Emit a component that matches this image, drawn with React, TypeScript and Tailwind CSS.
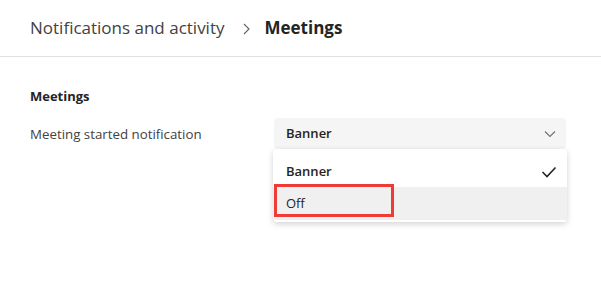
export default function App() {
  return (
    <div className="w-[601px] h-[294px] bg-white text-[#242424]" style={{ fontFamily: '"Open Sans", "Noto Sans", sans-serif' }}>
      <div className="h-[57px] border-b border-[#e1e1e1] px-[30px] flex items-center">
        <span className="text-[17px] text-[#424242]">Notifications and activity</span>
        <svg width="9" height="14" viewBox="0 0 9 14" className="ml-[17px] mr-[14px] mt-[2px]">
          <path d="M2 2l5 5-5 5" fill="none" stroke="#616161" strokeWidth="1.1" />
        </svg>
        <span className="text-[17px] font-bold">Meetings</span>
      </div>

      <div className="px-[30px] pt-[30px]">
        <div className="text-[13px] font-bold leading-[19px]">Meetings</div>
        <div className="mt-[12px] flex items-start">
          <div className="w-[244px] pt-[7px] text-[13.3px] text-[#424242]">Meeting started notification</div>
          <div className="w-[292px] relative">
            <div className="h-[31px] bg-[#f5f5f5] rounded-[4px] flex items-center justify-between pl-[12px] pr-[10px]">
              <span className="text-[13px] font-semibold">Banner</span>
              <svg width="12" height="8" viewBox="0 0 12 8">
                <path d="M1 1.5l5 5 5-5" fill="none" stroke="#707070" strokeWidth="1.1" />
              </svg>
            </div>
            <div className="absolute left-[-1px] top-[31px] w-[294px] bg-white rounded-[4px] shadow-[0_2px_6px_rgba(0,0,0,0.18)] pt-[7px] pb-[2px]">
              <div className="h-[31px] flex items-center justify-between pl-[13px] pr-[10px]">
                <span className="text-[13px] font-semibold">Banner</span>
                <svg width="16" height="12" viewBox="0 0 16 12">
                  <path d="M1.5 6l4.5 4.5 8.5-9" fill="none" stroke="#242424" strokeWidth="1.6" />
                </svg>
              </div>
              <div className="h-[33px] bg-[#f0f0f0] relative flex items-center pl-[13px]">
                <span className="text-[13px]">Off</span>
                <div className="absolute left-[1px] top-[-3px] h-[33px] w-[120px] border-[3px] border-[#f03a35]" />
              </div>
            </div>
          </div>
        </div>
      </div>
    </div>
  );
}
